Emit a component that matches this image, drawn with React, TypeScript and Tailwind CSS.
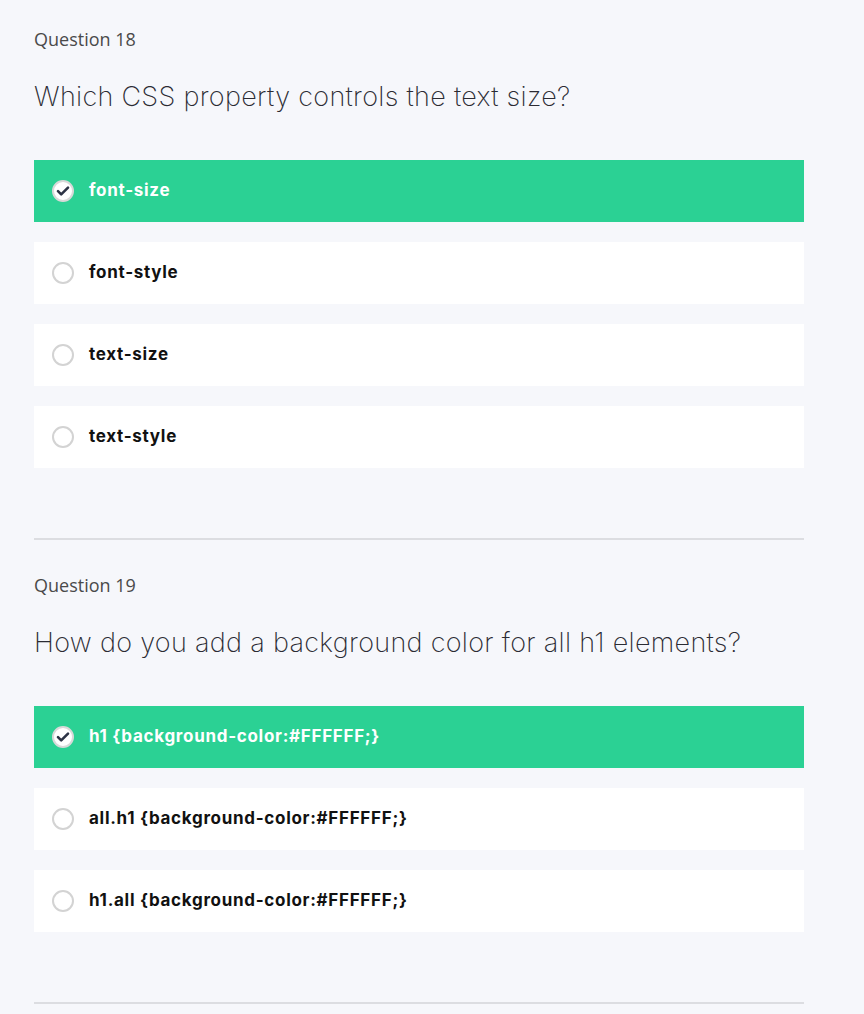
import React from "react";

interface Question {
  number: number;
  text: string;
  options: string[];
  selected: number;
}

const questions: Question[] = [
  {
    number: 18,
    text: "Which CSS property controls the text size?",
    options: ["font-size", "font-style", "text-size", "text-style"],
    selected: 0,
  },
  {
    number: 19,
    text: "How do you add a background color for all h1 elements?",
    options: [
      "h1 {background-color:#FFFFFF;}",
      "all.h1 {background-color:#FFFFFF;}",
      "h1.all {background-color:#FFFFFF;}",
    ],
    selected: 0,
  },
];

function Radio({ checked }: { checked: boolean }) {
  if (checked) {
    return (
      <span className="flex h-[22px] w-[22px] items-center justify-center rounded-full border-2 border-[#d9d9d9] bg-white">
        <svg width="14" height="14" viewBox="0 0 14 14" fill="none">
          <path d="M2 7.2l3.2 3.2L12 3.6" stroke="#2c3345" strokeWidth="2.6" strokeLinecap="round" strokeLinejoin="round" />
        </svg>
      </span>
    );
  }
  return <span className="h-[22px] w-[22px] rounded-full border-2 border-[#d3d3d3] bg-white" />;
}

export default function App() {
  return (
    <div className="min-h-screen bg-[#f6f7fb] px-[34px] pt-[27px]" style={{ fontFamily: "'DejaVu Sans', sans-serif" }}>
      <div className="w-[770px]">
        {questions.map((q, qi) => (
          <div key={q.number}>
            {qi > 0 && <div className="h-[33px]" />}
            <div className="text-[18px] leading-[24px] text-[#4a4a4a] font-['Open_Sans',sans-serif]">
              Question {q.number}
            </div>
            <h2 className="mt-[28px] text-[27px] leading-[36px] tracking-[0.3px] font-extralight text-[#2b2b33] font-['Inter',sans-serif]">
              {q.text}
            </h2>
            <ul className="mt-[45px] flex flex-col gap-[20px]">
              {q.options.map((opt, i) => {
                const checked = i === q.selected;
                return (
                  <li
                    key={opt}
                    className={
                      checked
                        ? "flex h-[62px] items-center gap-[15px] bg-[#2bd194] pl-[18px] text-white"
                        : "flex h-[62px] items-center gap-[15px] bg-white pl-[18px] text-[#111]"
                    }
                  >
                    <Radio checked={checked} />
                    <span className="text-[17px] tracking-[0.7px] font-bold font-['Inter',sans-serif]">{opt}</span>
                  </li>
                );
              })}
            </ul>
            <div className="mt-[70px] border-t-2 border-[#dcdde1]" />
          </div>
        ))}
      </div>
    </div>
  );
}
